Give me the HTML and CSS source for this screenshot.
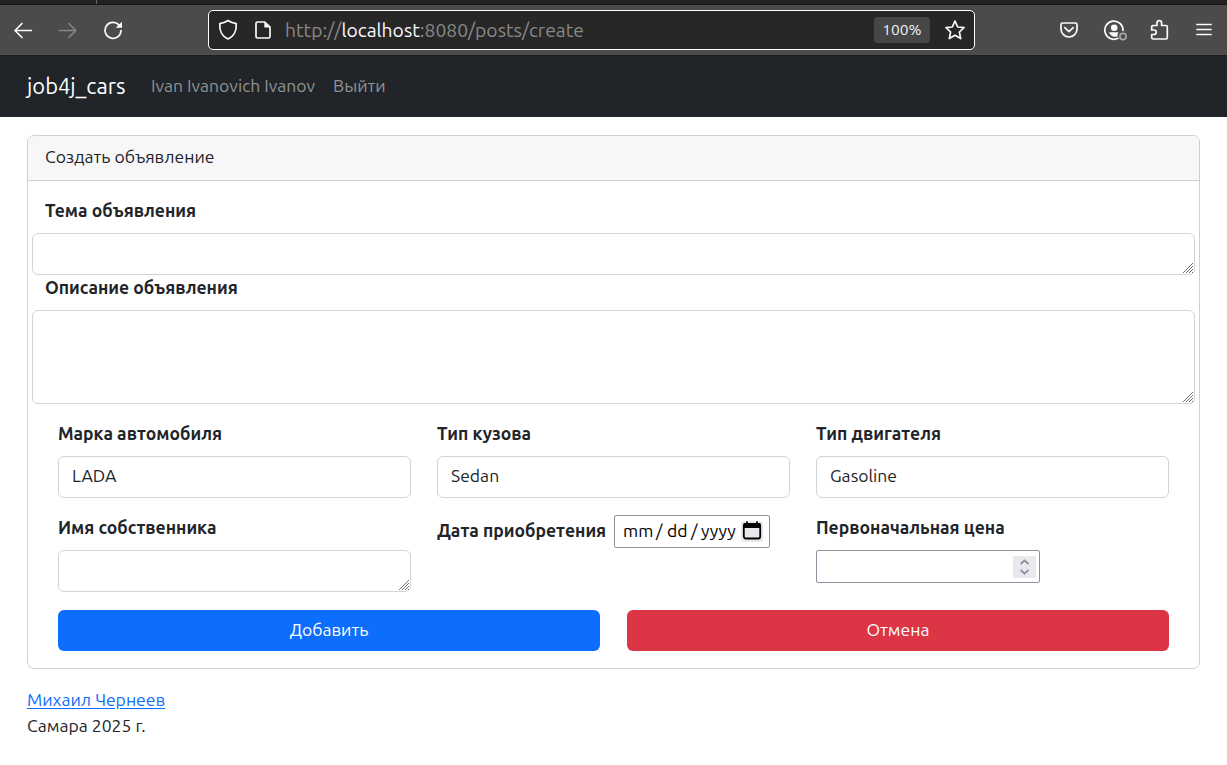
FILE: index.html
```html
<!DOCTYPE html>
<html lang="ru">
<head>
<meta charset="utf-8">
<title>Создать объявление</title>
<link rel="stylesheet" href="styles.css">
</head>
<body>
<div class="tabs"><span class="tab-edge"></span></div>
<div class="toolbar">
  <div class="nav-icons">
    <svg width="20" height="20" viewBox="0 0 20 20" class="ic"><path d="M18.300 10.500H2M9 3.500L2 10.500L9 17.500"/></svg>
    <svg width="20" height="20" viewBox="0 0 20 20" class="ic dim"><path d="M1.500 10.500H17.800M10.800 3.500L17.800 10.500L10.800 17.500"/></svg>
    <svg width="20" height="20" viewBox="0 0 20 20" class="ic"><path d="M18 10.500A8 8 0 1 1 14.600 3.800L16 5.400"/><path class="solid" d="M19 1.800V7.700H12.700Z"/></svg>
  </div>
  <div class="urlbar">
    <svg width="20" height="22" viewBox="0 0 20 22" class="ic shield"><path d="M10 1.500C12.600 3.300 15.500 4.300 18.200 4.700C18.700 11 16.200 17.400 10 20C3.800 17.400 1.300 11 1.800 4.700C4.500 4.300 7.400 3.300 10 1.500Z"/></svg>
    <svg width="18" height="20" viewBox="0 0 18 20" class="ic page"><path d="M3.500 2H10.800L16 7.200V16.500Q16 18 14.500 18H3.500Q2 18 2 16.500V3.500Q2 2 3.500 2Z"/><path class="solid" d="M10.300 2V7.600H16Z"/></svg>
    <span class="url">http://<b>localhost</b>:8080/posts/create</span>
    <span class="zoom">100%</span>
    <svg width="22" height="22" viewBox="0 0 22 22" class="ic star"><path d="M11 2L13.700 8L20 8.700L15.400 13L16.700 19.600L11 16.300L5.300 19.600L6.600 13L2 8.700L8.300 8Z"/></svg>
  </div>
  <div class="right-icons">
    <svg width="20" height="20" viewBox="0 0 20 20" class="ic"><path d="M3.500 3H16.500Q18 3 18 4.500V9A8 8 0 0 1 2 9V4.500Q2 3 3.500 3Z"/><path d="M5.800 7.700L10 11.700L14.200 7.700"/></svg>
    <svg width="26" height="22" viewBox="0 0 26 22" class="ic"><path d="M15 19.300A9.100 9.100 0 1 1 20 11.500"/><circle class="solid" cx="11.200" cy="8.700" r="3.300"/><path class="solid" d="M5.900 13.300H15.500Q14 15.500 14.500 17.300Q9 19.300 5.900 13.300Z"/><circle class="badge" cx="20" cy="17.500" r="3.100"/></svg>
    <svg width="20" height="22" viewBox="0 0 20 22" class="ic"><path d="M3 6.500H7V4A2.300 2.300 0 0 1 11.600 4V6.500H16Q17.300 6.500 17.300 8V18.500Q17.300 20 16 20H3.200Q1.700 20 1.700 18.500V15.500H4A2.200 2.200 0 0 0 4 11H1.700V8Q1.700 6.500 3 6.500Z"/></svg>
    <svg width="16" height="14" viewBox="0 0 16 14" class="ic menu"><path d="M1 1.500H15M1 6.500H15M1 11.500H15"/></svg>
  </div>
</div>
<nav class="navbar">
  <a class="brand">job4j_cars</a>
  <a class="navlink user">Ivan Ivanovich Ivanov</a>
  <a class="navlink exit">Выйти</a>
</nav>
<main class="card">
  <div class="card-head">Создать объявление</div>
  <form class="card-body">
    <label class="lbl wide">Тема объявления</label>
    <div class="area short"><svg class="grip" viewBox="0 0 10 10"><path d="M0 10L10 0M3 10L10 3M6 10L10 6M9 10L10 9"/></svg></div>
    <label class="lbl wide">Описание объявления</label>
    <div class="area tall"><svg class="grip" viewBox="0 0 10 10"><path d="M0 10L10 0M3 10L10 3M6 10L10 6M9 10L10 9"/></svg></div>
    <div class="grid">
      <div><label class="lbl">Марка автомобиля</label><div class="select">LADA</div></div>
      <div><label class="lbl">Тип кузова</label><div class="select">Sedan</div></div>
      <div><label class="lbl">Тип двигателя</label><div class="select">Gasoline</div></div>
      <div><label class="lbl">Имя собственника</label><div class="area short"><svg class="grip" viewBox="0 0 10 10"><path d="M0 10L10 0M3 10L10 3M6 10L10 6M9 10L10 9"/></svg></div></div>
      <div class="date-row"><label class="date-label">Дата приобретения</label>
        <div class="date"><span class="mm">mm</span><span class="sl">/</span><span class="dd">dd</span><span class="sl">/</span><span class="yy">yyyy</span>
        <span class="cal"><svg width="22" height="21" viewBox="0 0 22 21"><rect x="2.800" y="3" width="16.400" height="14.500" rx="2" fill="none" stroke="#000" stroke-width="1.800"/><path d="M2 7V4Q2 2 4 2H5V.4H7V2H15V.4H17V2H18Q20 2 20 4V7Z"/></svg></span></div>
      </div>
      <div><label class="lbl">Первоначальная цена</label><div class="number"><span class="spin"><svg width="23" height="22" viewBox="0 0 23 22"><path d="M7.500 8L11.500 4.500L15.500 8M7.500 14L11.500 17.500L15.500 14"/></svg></span></div></div>
    </div>
    <div class="buttons"><button type="button" class="btn blue">Добавить</button><button type="button" class="btn red">Отмена</button></div>
  </form>
</main>
<footer class="footer"><a class="author">Михаил Чернеев</a><span class="city">Самара 2025 г.</span></footer>
</body>
</html>
```
FILE: styles.css
```css
* { box-sizing: border-box; }
body { margin: 0; height: 765px; overflow: hidden; background: #fff; color: #212529; font: 370 17.55px/26px "Ubuntu", "Noto Sans", sans-serif; white-space: nowrap; }
svg { display: block; flex: none; }
.tabs { height: 5px; background: #222; border-bottom: 1px solid #171717; padding-left: 96px; }
.tab-edge { display: block; width: 1px; height: 4px; background: #666; }
.toolbar { height: 51px; background: #4b4b4b; border-bottom: 1px solid #1d1d1d; display: flex; align-items: center; }
.ic { fill: none; stroke: #fbfbfe; stroke-width: 1.7; stroke-linecap: round; stroke-linejoin: round; }
.dim { stroke: #868686; }
.solid { fill: #fbfbfe; stroke: none; }
.badge { stroke: #a5a5a5; }
.nav-icons { width: 208px; padding-left: 13px; display: flex; gap: 25px; }
.urlbar { width: 767px; height: 40px; border: 1px solid #fff; border-radius: 5px; background: #272727; display: flex; align-items: center; padding-left: 9px; }
.page { margin-left: 16px; }
.url { width: 589px; margin-left: 13px; color: #898989; font-size: 19.3px; }
.url b { color: #fbfbfe; font-weight: 400; }
.zoom { width: 56px; height: 26px; border-radius: 4px; background: #474747; color: #f0f0f0; font-size: 15.5px; line-height: 25px; text-align: center; }
.star { margin-left: 14px; }
.right-icons { flex: 1; display: flex; align-items: center; padding-left: 84px; }
.right-icons svg:nth-child(2) { margin-left: 24px; }
.right-icons svg:nth-child(3) { margin-left: 21px; }
.right-icons svg:nth-child(4) { margin-left: 26px; }
.navbar { height: 61px; background: #212529; display: flex; align-items: center; padding: 0 0 1px 27px; }
.brand { width: 124px; color: #fff; font-size: 21.9px; }
.navlink { color: #909294; }
.user { width: 182px; }
.card { margin: 18px 27px 0; height: 534px; border: 1px solid #ced0d2; border-radius: 7px; }
.card-head { height: 45px; padding: 8px 17px; background: #f7f7f7; border-bottom: 1px solid #ced0d2; border-radius: 6px 6px 0 0; }
.card-body { padding: 17px 4px 0; }
.lbl { display: block; height: 26px; margin-bottom: 9px; font-weight: 590; }
.wide { padding-left: 13px; }
.area { position: relative; border: 1px solid #ced4da; border-radius: 6px; }
.short { height: 42px; }
.tall { height: 94px; }
.grip { position: absolute; right: 1px; bottom: 1px; width: 10px; height: 10px; fill: none; stroke: #707070; stroke-width: 1; }
.grid { display: grid; grid-template-columns: repeat(3, 353px); gap: 17px 26px; padding: 17px 26px 0; }
.select { height: 42px; border: 1px solid #ced4da; border-radius: 6px; padding: 6px 13px; }
.date-row { display: flex; align-items: flex-start; }
.date-label { width: 177px; padding-top: 3px; font-weight: 590; }
.date { width: 156px; height: 33px; border: 1px solid #8f8f9d; border-radius: 2px; padding: 2px 0 0 8px; color: #000; display: flex; }
.mm { width: 33px; }
.sl { width: 11px; }
.dd { width: 24px; }
.yy { width: 39px; }
.date .sl + .yy { margin-left: -1px; width: 40px; }
.cal { width: 22px; height: 21px; margin-top: 3px; background: #e9e9ed; border-radius: 3px; }
.number { width: 224px; height: 33px; border: 1px solid #8f8f9d; border-radius: 2px; display: flex; justify-content: flex-end; padding: 5px 3px; }
.spin { width: 23px; height: 22px; background: #e9e9ed; }
.spin path { fill: none; stroke: #8f8f9d; stroke-width: 1.7; }
.buttons { display: grid; grid-template-columns: 542px 542px; gap: 27px; padding: 18px 26px 0; }
.btn { height: 41px; border: 0; border-radius: 6px; color: #fff; font: inherit; padding: 0 0 2px; }
.blue { background: #0d6efd; }
.red { background: #dc3545; }
.footer { display: flex; flex-direction: column; align-items: flex-start; padding: 18px 27px 0; }
.author { color: #0d6efd; text-decoration: underline; text-underline-offset: 2px; }
```
